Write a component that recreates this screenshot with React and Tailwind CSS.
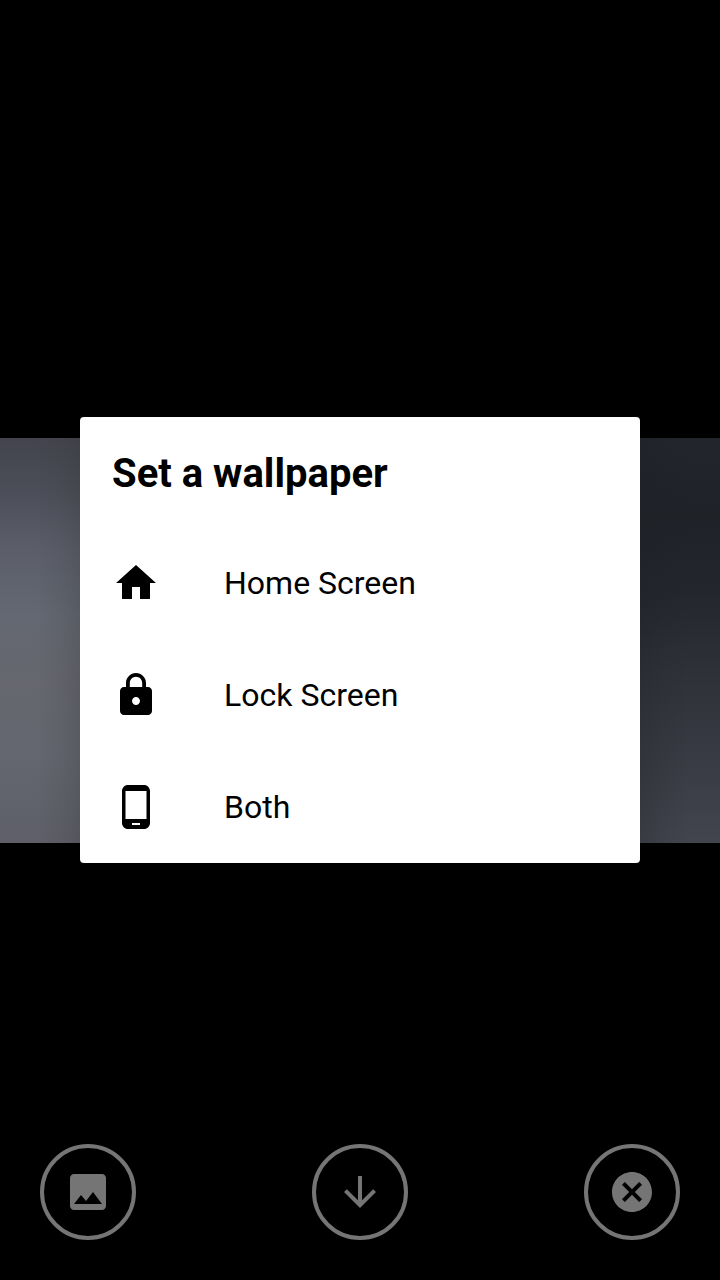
import React from "react";

const PATHS = {
  home: "M10 20v-6h4v6h5v-8h3L12 3 2 12h3v8z",
  lock: "M18 8h-1V6c0-2.76-2.24-5-5-5S7 3.24 7 6v2H6c-1.1 0-2 .9-2 2v10c0 1.1.9 2 2 2h12c1.1 0 2-.9 2-2V10c0-1.1-.9-2-2-2zm-6 9c-1.1 0-2-.9-2-2s.9-2 2-2 2 .9 2 2-.9 2-2 2zm3.1-9H8.9V6c0-1.71 1.39-3.1 3.1-3.1 1.71 0 3.1 1.39 3.1 3.1v2z",
  phone:
    "M16 1H8C6.34 1 5 2.34 5 4v16c0 1.66 1.34 3 3 3h8c1.66 0 3-1.34 3-3V4c0-1.66-1.34-3-3-3zm-2 20h-4v-1h4v1zm3.25-3H6.75V4h10.5v14z",
  image:
    "M21 19V5c0-1.1-.9-2-2-2H5c-1.1 0-2 .9-2 2v14c0 1.1.9 2 2 2h14c1.1 0 2-.9 2-2zM8.5 13.5l2.5 3.01L14.5 12l4.5 6H5l3.5-4.5z",
  download: "M20 12l-1.41-1.41L13 16.17V4h-2v12.17l-5.58-5.59L4 12l8 8 8-8z",
  cancel:
    "M12 2C6.47 2 2 6.47 2 12s4.47 10 10 10 10-4.47 10-10S17.53 2 12 2zm5 13.59L15.59 17 12 13.41 8.41 17 7 15.59 10.59 12 7 8.41 8.41 7 12 10.59 15.59 7 17 8.41 13.41 12 17 15.59z",
};

function Icon({ name }) {
  return (
    <svg viewBox="0 0 24 24" className="size-12 shrink-0" fill="currentColor" aria-hidden="true">
      <path d={PATHS[name]} />
    </svg>
  );
}

function RoundButton({ icon }) {
  return (
    <button className="flex size-24 items-center justify-center rounded-full border-4 border-[#757575] text-[#757575]">
      <Icon name={icon} />
    </button>
  );
}

function Option({ icon, label }) {
  return (
    <li className="flex h-28 items-center gap-16 px-8">
      <Icon name={icon} />
      <span className="text-[32px] leading-none">{label}</span>
    </li>
  );
}

export default function App() {
  return (
    <main className="relative flex h-[1280px] w-[720px] flex-col overflow-hidden bg-black pt-[438px] font-['Roboto',sans-serif]">
      <div className="flex h-[405px] justify-between">
        <div className="w-[90px] bg-[linear-gradient(to_bottom,#43444d_0%,#4b4e58_13%,#5b5e69_27%,#646872_44%,#66676f_60%,#646770_78%,#5e5f68_100%)]">
          <div className="h-full bg-[linear-gradient(to_right,transparent_40%,rgba(50,50,54,0.1)_68%,rgba(50,50,50,0.24)_90%)]" />
        </div>
        <div className="w-[90px] bg-[linear-gradient(to_bottom,#22252b_0%,#1f2227_20%,#24262d_38%,#2c2e36_52%,#373942_75%,#42444e_100%)]">
          <div className="h-full bg-[linear-gradient(to_left,transparent_35%,rgba(28,30,34,0.1)_65%,rgba(28,30,34,0.24)_90%)]" />
        </div>
      </div>
      <nav className="mt-auto flex justify-between px-10 pb-10">
        <RoundButton icon="image" />
        <RoundButton icon="download" />
        <RoundButton icon="cancel" />
      </nav>
      <div className="absolute inset-0 flex items-center justify-center">
        <section role="dialog" className="h-[446px] w-[560px] rounded bg-white text-black">
          <h1 className="flex h-[110px] items-center px-8 pt-1 text-[40px] leading-none font-bold">Set a wallpaper</h1>
          <ul>
            <Option icon="home" label="Home Screen" />
            <Option icon="lock" label="Lock Screen" />
            <Option icon="phone" label="Both" />
          </ul>
        </section>
      </div>
    </main>
  );
}
